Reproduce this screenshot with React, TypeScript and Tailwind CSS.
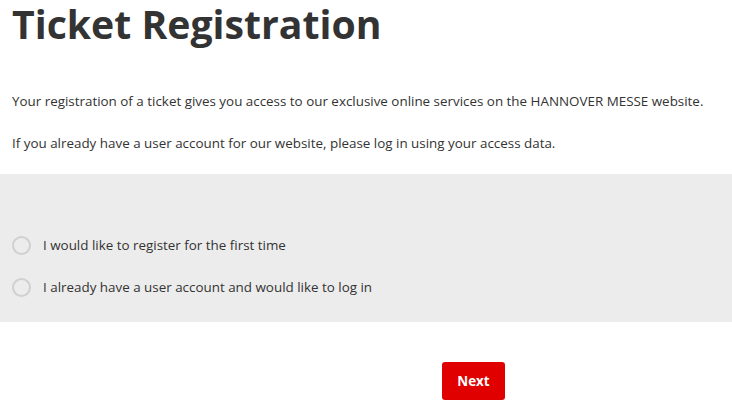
export default function App() {
  return (
    <div className="w-[732px] h-[416px] bg-white overflow-hidden text-[#333] font-['Open_Sans',sans-serif]">
      <h1 className="pl-3 text-[39.2px] font-bold leading-[48px] text-[#333]">Ticket Registration</h1>

      <div className="px-3 pt-[44px] text-[13.4px] leading-[18px]">
        <p>Your registration of a ticket gives you access to our exclusive online services on the HANNOVER MESSE website.</p>
        <p className="mt-[24px]">If you already have a user account for our website, please log in using your access data.</p>
      </div>

      <div className="mt-[22px] h-[148px] bg-[#ececec] pl-3 pt-[62px] flex flex-col gap-[24px] text-[13.4px]">
        <label className="flex items-center gap-[12px] h-[18px]">
          <span className="w-[19px] h-[19px] rounded-full border-2 border-[#d0d0d0] bg-[#ececec]" />
          <span>I would like to register for the first time</span>
        </label>
        <label className="flex items-center gap-[12px] h-[18px]">
          <span className="w-[19px] h-[19px] rounded-full border-2 border-[#d0d0d0] bg-[#ececec]" />
          <span>I already have a user account and would like to log in</span>
        </label>
      </div>

      <div className="pt-[40px] pl-[442px]">
        <button className="w-[63px] h-[38px] rounded-[3px] bg-[#e10000] text-white text-[13.4px] font-bold">Next</button>
      </div>
    </div>
  );
}
